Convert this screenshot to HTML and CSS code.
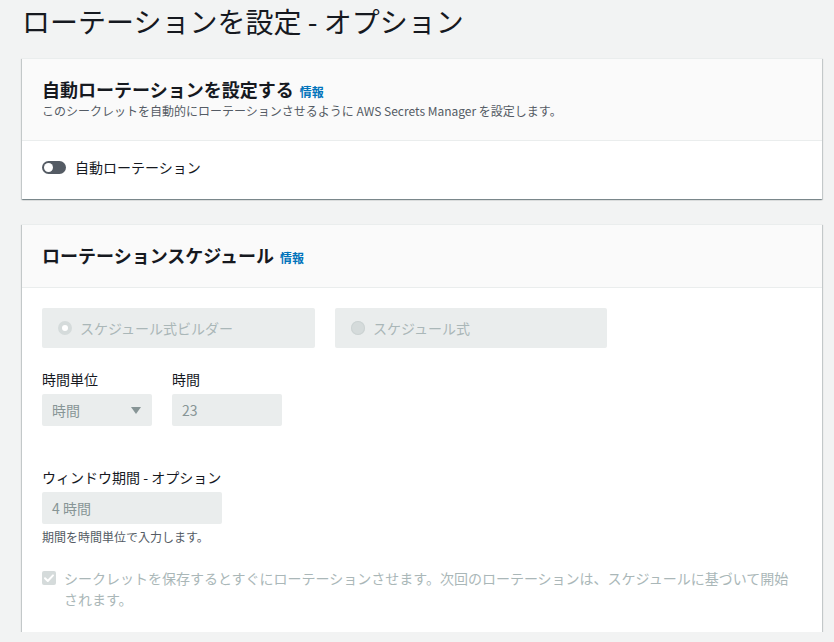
FILE: index.html
```html
<!DOCTYPE html>
<html lang="ja">
<head>
<meta charset="utf-8">
<title>ローテーションを設定 - オプション</title>
<link rel="stylesheet" href="styles.css">
</head>
<body>
<main class="page">
  <h1 class="page-title">ローテーションを設定 - オプション</h1>

  <section class="card">
    <header class="card-header">
      <h2 class="card-title">自動ローテーションを設定する <a class="info" href="#">情報</a></h2>
      <p class="card-desc">このシークレットを自動的にローテーションさせるように AWS Secrets Manager を設定します。</p>
    </header>
    <div class="card-body card-body-toggle">
      <label class="toggle-row">
        <span class="toggle"><span class="knob"></span></span>
        <span class="toggle-label">自動ローテーション</span>
      </label>
    </div>
  </section>

  <section class="card card-second">
    <header class="card-header card-header-single">
      <h2 class="card-title">ローテーションスケジュール <a class="info" href="#">情報</a></h2>
    </header>
    <div class="card-body">
      <div class="tiles">
        <div class="tile">
          <span class="radio radio-on"></span>
          <span class="tile-text">スケジュール式ビルダー</span>
        </div>
        <div class="tile">
          <span class="radio radio-off"></span>
          <span class="tile-text">スケジュール式</span>
        </div>
      </div>

      <div class="field-row">
        <div class="field">
          <div class="field-label">時間単位</div>
          <div class="control control-select">
            <span class="control-value">時間</span>
            <span class="caret"></span>
          </div>
        </div>
        <div class="field">
          <div class="field-label">時間</div>
          <div class="control control-input">
            <span class="control-value">23</span>
          </div>
        </div>
      </div>

      <div class="field field-window">
        <div class="field-label">ウィンドウ期間 - オプション</div>
        <div class="control control-wide">
          <span class="control-value">4 時間</span>
        </div>
        <div class="field-hint">期間を時間単位で入力します。</div>
      </div>

      <div class="check-row">
        <span class="checkbox">
          <svg width="14" height="14" viewBox="0 0 14 14"><path d="M3 7.2 L5.8 10 L11 4.4" fill="none" stroke="#ffffff" stroke-width="2" stroke-linecap="round" stroke-linejoin="round"/></svg>
        </span>
        <span class="check-text">シークレットを保存するとすぐにローテーションさせます。次回のローテーションは、スケジュールに基づいて開始されます。</span>
      </div>
    </div>
  </section>
</main>
</body>
</html>
```

FILE: styles.css
```css
* {
  box-sizing: border-box;
}

body {
  margin: 0;
  background: #f2f3f3;
  color: #16191f;
  font-family: "Noto Sans CJK JP", "Noto Sans", sans-serif;
}

.page {
  padding: 3px 0 0 22px;
  width: 822px;
}

.page-title {
  margin: 0;
  font-size: 28px;
  font-weight: 400;
  line-height: 36px;
  color: #16191f;
}

.card {
  margin-top: 19px;
  width: 800px;
  background: #ffffff;
  box-shadow: 0 1px 1px 0 rgba(0, 28, 36, 0.3), 1px 1px 1px 0 rgba(0, 28, 36, 0.15), -1px 1px 1px 0 rgba(0, 28, 36, 0.15);
  border-top: 1px solid #eaeded;
}

.card-second {
  margin-top: 25px;
}

.card-header {
  background: #fafafa;
  border-bottom: 1px solid #eaeded;
  padding: 19px 20px 20px;
}

.card-header-single {
  padding: 19px 20px 21px;
}

.card-title {
  margin: 0;
  font-size: 18px;
  font-weight: 700;
  line-height: 22px;
  color: #16191f;
}

.info {
  font-size: 12px;
  font-weight: 700;
  line-height: 1;
  color: #0073bb;
  text-decoration: none;
  margin-left: 2px;
}

.card-desc {
  margin: 2px 0 0;
  font-size: 12px;
  line-height: 18px;
  color: #545b64;
}

.card-body {
  padding: 20px 20px 22px;
}

.card-body-toggle {
  padding: 16px 20px 22px;
}

.toggle-row {
  display: flex;
  align-items: center;
  gap: 9px;
  font-size: 14px;
  line-height: 20px;
}

.toggle {
  position: relative;
  display: block;
  width: 24px;
  height: 13px;
  border-radius: 7px;
  background: #545b64;
}

.knob {
  position: absolute;
  left: 2px;
  top: 2px;
  width: 9px;
  height: 9px;
  border-radius: 50%;
  background: #ffffff;
}

.toggle-label {
  color: #16191f;
}

.tiles {
  display: grid;
  grid-template-columns: 273px 272px;
  gap: 20px;
}

.tile {
  display: flex;
  align-items: center;
  gap: 8px;
  height: 40px;
  padding-left: 16px;
  background: #eaeded;
  border-radius: 2px;
  font-size: 14px;
  color: #aab7b8;
}

.radio {
  display: block;
  width: 14px;
  height: 14px;
  border-radius: 50%;
  background: #d5dbdb;
}

.radio-on {
  border: 4px solid #d5dbdb;
  background: #ffffff;
}

.radio-off {
  background: #d5dbdb;
  box-shadow: inset 0 0 0 1px #ccd3d3;
}

.field-row {
  display: flex;
  gap: 20px;
  margin-top: 20px;
}

.field-label {
  font-size: 14px;
  line-height: 22px;
  color: #16191f;
  margin-bottom: 4px;
}

.control {
  display: flex;
  align-items: center;
  height: 32px;
  padding: 0 10px;
  background: #eaeded;
  border-radius: 2px;
  font-size: 14px;
  color: #879596;
}

.control-select,
.control-input {
  width: 110px;
}

.control-select {
  justify-content: space-between;
}

.caret {
  display: block;
  width: 0;
  height: 0;
  margin-right: 1px;
  border-left: 5px solid transparent;
  border-right: 5px solid transparent;
  border-top: 7px solid #879596;
}

.control-wide {
  width: 180px;
}

.field-window {
  margin-top: 40px;
}

.field-hint {
  margin-top: 4px;
  font-size: 12px;
  line-height: 18px;
  color: #545b64;
}

.check-row {
  display: flex;
  align-items: flex-start;
  gap: 8px;
  margin-top: 22px;
}

.checkbox {
  flex: none;
  display: block;
  width: 14px;
  height: 14px;
  margin-top: 3px;
  border-radius: 2px;
  background: #d5dbdb;
}

.checkbox svg {
  display: block;
}

.check-text {
  font-size: 14px;
  line-height: 21px;
  color: #aab7b8;
}
```
